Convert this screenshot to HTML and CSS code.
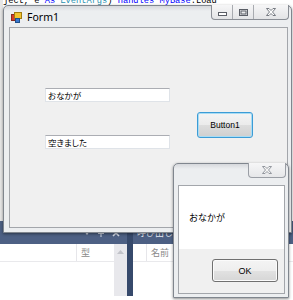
FILE: index.html
```html
<!DOCTYPE html>
<html>
<head>
<meta charset="utf-8">
<link rel="stylesheet" href="styles.css">
</head>
<body>
<div class="desk">
  <div class="editor">
    <div class="code"><span class="k">ject, e </span><span class="b">As</span> <span class="t">EventArgs</span>) <span class="b">Handles</span> <span class="b">MyBase</span>.Load</div>
  </div>
  <div class="tools">
    <div class="panel p1">
      <div class="ph">
        <svg class="ic" width="6" height="4" viewBox="0 0 6 4"><path d="M0 0H6L3 4Z" fill="#d6dce8"/></svg>
        <svg class="ic pin" width="6" height="9" viewBox="0 0 6 9"><path d="M1 0.5H5M1.5 0.5V5M4.5 0.5V5M0 5.5H6M3 5.5V9" stroke="#d6dce8" stroke-width="1" fill="none"/></svg>
        <svg class="ic" width="8" height="8" viewBox="0 0 8 8"><path d="M1 1L7 7M7 1L1 7" stroke="#d6dce8" stroke-width="1.6"/></svg>
      </div>
      <div class="pbody">
        <div class="pmain">
          <div class="cols"><div class="c1 w1"></div><div class="c2">型</div></div>
        </div>
        <div class="scroll"><svg width="7" height="4" viewBox="0 0 7 4"><path d="M0 4L3.5 0L7 4Z" fill="#c2c3c9"/></svg></div>
      </div>
    </div>
    <div class="sep"></div>
    <div class="panel p2">
      <div class="ph ph2"><span class="ptitle">呼び出し階層</span></div>
      <div class="cols"><div class="c1 w2"></div><div class="c2">名前</div></div>
    </div>
  </div>

  <div class="win form1">
    <div class="title">
      <svg class="appicon" width="11" height="11" viewBox="0 0 11 11">
        <rect x="0.5" y="2.5" width="5" height="6" fill="#d83a2a" stroke="#8a2a20"/>
        <rect x="3.5" y="0.5" width="7" height="6" fill="#f2c230" stroke="#a07c10"/>
        <rect x="4.5" y="6.5" width="4" height="4" fill="#3a78d0" stroke="#20508a"/>
      </svg>
      <span class="ttext">Form1</span>
      <div class="ctrls">
        <div class="cb cmin"><svg width="9" height="4" viewBox="0 0 9 4"><rect x="0.5" y="0.5" width="8" height="3" fill="#fff" stroke="#5a5e66"/></svg></div>
        <div class="cb cmax"><svg width="9" height="7" viewBox="0 0 9 7"><rect x="0.5" y="0.5" width="8" height="6" fill="none" stroke="#5a5e66"/><rect x="2" y="2" width="5" height="3" fill="none" stroke="#5a5e66"/></svg></div>
        <div class="cb cclose"><svg width="10" height="8" viewBox="0 0 10 8"><path d="M0.5 0.5H3L5 2.5L7 0.5H9.5L6.5 4L9.5 7.5H7L5 5.5L3 7.5H0.5L3.5 4Z" fill="#fff" stroke="#6a6e76" stroke-width="0.9"/></svg></div>
      </div>
    </div>
    <div class="client">
      <div class="tb tb1">おなかが</div>
      <div class="tb tb2">空きました</div>
      <div class="btn1">Button1</div>
    </div>
  </div>

  <div class="win msg">
    <div class="title mtitle">
      <div class="mclose"><svg width="10" height="8" viewBox="0 0 10 8"><path d="M0.5 0.5H3L5 2.5L7 0.5H9.5L6.5 4L9.5 7.5H7L5 5.5L3 7.5H0.5L3.5 4Z" fill="#f4f4f4" stroke="#8a8e96" stroke-width="0.9"/></svg></div>
    </div>
    <div class="mclient">
      <div class="mtext"><span>おなかが</span></div>
      <div class="mfoot"><div class="okbtn">OK</div></div>
    </div>
  </div>
</div>
</body>
</html>
```

FILE: styles.css
```css
html, body {
  margin: 0;
  padding: 0;
}
body {
  width: 293px;
  height: 300px;
  overflow: hidden;
  background: #ffffff;
}
.desk {
  position: relative;
  width: 293px;
  height: 300px;
  overflow: hidden;
}
.editor {
  height: 225px;
  background: #ffffff;
  border-left: 3px solid #e6e6e6;
  box-sizing: border-box;
}
.code {
  font-family: "Liberation Mono", monospace;
  font-size: 8.7px;
  line-height: 10px;
  margin-top: -4px;
  color: #000;
  white-space: nowrap;
}
.code .b { color: #0000ff; }
.code .t { color: #2b91af; }

.tools {
  display: flex;
  height: 75px;
}
.panel {
  display: flex;
  flex-direction: column;
  background: #ffffff;
}
.p1 { width: 127px; }
.p2 { flex: 1; }
.ph {
  height: 23px;
  background: #4d6084;
  display: flex;
  align-items: center;
  justify-content: flex-end;
  padding-right: 7px;
  gap: 8px;
  box-sizing: border-box;
}
.ph .ic { display: block; }
.ph .pin { margin-top: -1px; }
.ph2 {
  justify-content: flex-start;
  padding-left: 4px;
}
.ptitle {
  font-family: "Noto Sans CJK JP", sans-serif;
  font-size: 9px;
  color: #e8ecf4;
  white-space: nowrap;
}
.pbody {
  flex: 1;
  display: flex;
}
.pmain { flex: 1; }
.scroll {
  width: 13px;
  background: #e8e8ec;
  display: flex;
  justify-content: center;
  padding-top: 6px;
  box-sizing: border-box;
}
.scroll svg { display: block; }
.cols {
  display: flex;
  height: 18px;
  border-bottom: 1px solid #e9e9ec;
  box-sizing: border-box;
}
.c1 { border-right: 1px solid #e6e6ea; box-sizing: border-box; }
.w1 { width: 77px; }
.w2 { width: 14px; }
.c2 {
  font-family: "Noto Sans CJK JP", sans-serif;
  font-size: 9px;
  line-height: 18px;
  color: #8a8a8a;
  padding-left: 4px;
}
.sep {
  width: 6px;
  background: #36496b;
}

.win {
  position: absolute;
  box-sizing: border-box;
  border: 1px solid #80868e;
  border-radius: 5px 5px 0 0;
  background: linear-gradient(#d6d8dc 0px, #eceef0 5px, #eceef0 100%);
  box-shadow: 0 1px 3px rgba(0,0,0,0.45);
}
.form1 {
  left: 3px;
  top: 5px;
  width: 289px;
  height: 228px;
  padding: 0 3px 4px 5px;
}
.title {
  position: relative;
  height: 21px;
  display: flex;
  align-items: center;
}
.appicon {
  display: block;
  margin-left: 2px;
  margin-top: 1px;
}
.ttext {
  font-family: "Noto Sans", sans-serif;
  font-size: 10.5px;
  color: #000;
  margin-left: 5px;
  margin-top: 1px;
}
.ctrls {
  position: absolute;
  right: -1px;
  top: -1px;
  display: flex;
  height: 15px;
  border: 1px solid #8a8e95;
  border-top: none;
  border-radius: 0 0 4px 4px;
  background: linear-gradient(#f6f6f7, #e3e4e6);
  box-sizing: border-box;
  overflow: hidden;
}
.cb {
  display: flex;
  align-items: center;
  justify-content: center;
  box-sizing: border-box;
}
.cb svg { display: block; }
.cmin { width: 21px; border-right: 1px solid #a8abb0; padding-top: 4px; }
.cmax { width: 21px; border-right: 1px solid #a8abb0; }
.cclose { width: 34px; }
.client {
  position: relative;
  height: 201px;
  box-sizing: border-box;
  border: 1px solid #a3a6ab;
  background: #f0f0f0;
}
.tb {
  position: absolute;
  left: 35px;
  width: 125px;
  height: 14px;
  box-sizing: border-box;
  border: 1px solid #dfe3e8;
  border-top-color: #abadb3;
  background: #ffffff;
  font-family: "Noto Sans CJK JP", sans-serif;
  font-size: 8.5px;
  line-height: 12px;
  padding-left: 2px;
  font-feature-settings: "palt";
  color: #000;
  white-space: nowrap;
}
.tb1 { top: 60px; }
.tb2 { top: 107px; }
.btn1 {
  position: absolute;
  left: 187px;
  top: 84px;
  width: 56px;
  height: 26px;
  box-sizing: border-box;
  border: 1px solid #3c9cd6;
  border-radius: 3px;
  box-shadow: inset 0 0 0 1px #a8dcf4;
  background: linear-gradient(#f4f4f4 0%, #ebebeb 50%, #dddddd 51%, #cfcfcf 100%);
  font-family: "Liberation Sans", sans-serif;
  font-size: 8.5px;
  color: #000;
  display: flex;
  align-items: center;
  justify-content: center;
}

.msg {
  left: 173px;
  top: 163px;
  width: 116px;
  height: 135px;
  padding: 0 3px 4px 4px;
}
.mtitle { justify-content: flex-end; }
.mclose {
  position: absolute;
  right: -1px;
  top: -1px;
  width: 38px;
  height: 15px;
  box-sizing: border-box;
  border: 1px solid #9a9ea5;
  border-top: none;
  border-radius: 0 0 4px 4px;
  background: linear-gradient(#f6f6f7, #e6e7e9);
  display: flex;
  align-items: center;
  justify-content: center;
}
.mclose svg { display: block; }
.mclient {
  height: 109px;
  box-sizing: border-box;
  border: 1px solid #a3a6ab;
  background: #f0f0f0;
  display: flex;
  flex-direction: column;
}
.mtext {
  height: 63px;
  background: #ffffff;
  display: flex;
  align-items: center;
  padding-left: 10px;
  font-family: "Noto Sans CJK JP", sans-serif;
  font-size: 9px;
  color: #000;
}
.mfoot {
  flex: 1;
  display: flex;
  justify-content: flex-end;
  align-items: flex-start;
  padding: 10px 6px 0 0;
}
.okbtn {
  width: 66px;
  height: 23px;
  box-sizing: border-box;
  border: 1px solid #707070;
  border-radius: 3px;
  box-shadow: inset 0 0 0 1px #fbfbfb;
  background: linear-gradient(#f4f4f4 0%, #eeeeee 50%, #e2e2e2 51%, #d6d6d6 100%);
  font-family: "Liberation Sans", sans-serif;
  font-size: 9px;
  color: #000;
  display: flex;
  align-items: center;
  justify-content: center;
}
```
